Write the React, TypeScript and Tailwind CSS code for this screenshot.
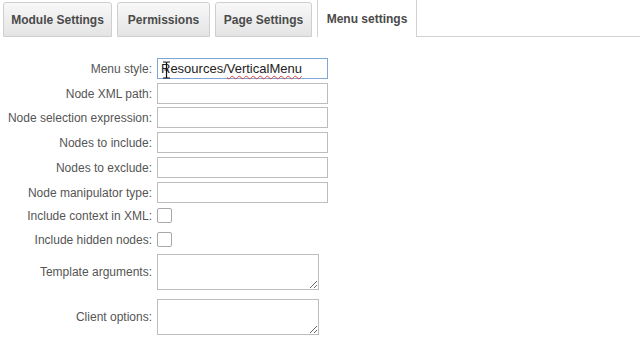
import React from 'react'

const font = { fontFamily: '"Liberation Sans", Arial, sans-serif' }

const tabs = [
  { label: 'Module Settings', w: 'w-[109px]' },
  { label: 'Permissions', w: 'w-[93px]' },
  { label: 'Page Settings', w: 'w-[97px]' },
]

function Label({ children }: { children: React.ReactNode }) {
  return (
    <div className="w-[153px] shrink-0 text-right text-[12px] text-[#555] leading-none pr-[1px]">
      {children}
    </div>
  )
}

function TextInput() {
  return (
    <input
      type="text"
      className="ml-[4px] h-[21px] w-[171px] border border-[#bdbdbd] bg-white px-[3px] text-[13px] outline-none"
    />
  )
}

function Checkbox() {
  return (
    <input
      type="checkbox"
      className="ml-[4px] h-[15px] w-[15px] appearance-none border border-[#a8a8a8] rounded-[2px] bg-white"
    />
  )
}

function TextArea() {
  return (
    <textarea className="ml-[4px] h-[36px] w-[162px] border border-[#bdbdbd] bg-white text-[13px] outline-none" />
  )
}

export default function App() {
  return (
    <div className="w-[640px] h-[360px] overflow-hidden bg-white" style={font}>
      <div className="flex items-end h-[37px] pl-[3px]">
        {tabs.map((t, i) => (
          <div
            key={t.label}
            className={`${t.w} ${i > 0 ? 'ml-[5px]' : ''} h-[35px] flex items-center justify-center rounded-t-[3px] border border-[#cfcfcf] bg-gradient-to-b from-[#f8f8f8] to-[#e4e4e4] text-[12px] font-bold text-[#4a4a4a]`}
          >
            {t.label}
          </div>
        ))}
        <div className="ml-[5px] w-[100px] h-[38px] flex items-center justify-center border-x border-[#d2d2d2] bg-white text-[12px] font-bold text-[#4a4a4a] pt-[1px]">
          Menu settings
        </div>
        <div className="flex-1 border-b border-[#d2d2d2]" />
      </div>

      <div className="pt-[21px] flex flex-col">
        <div className="flex items-center h-[21px]">
          <Label>Menu style:</Label>
          <div className="relative ml-[4px] h-[21px] w-[171px] border border-[#7fa6d6] bg-white pl-[3px] text-[13px] text-[#222] leading-[19px]">
            Resources/
            <span className="underline decoration-wavy decoration-[#e04040] decoration-1 underline-offset-2">
              VerticalMenu
            </span>
            <svg
              className="absolute left-[4px] top-[2px]"
              width="9"
              height="18"
              viewBox="0 0 9 18"
            >
              <path
                d="M1 1 H3.5 Q4.5 1 4.5 2.5 V15.5 Q4.5 17 3.5 17 H1 M8 1 H5.5 Q4.5 1 4.5 2.5 M4.5 15.5 Q4.5 17 5.5 17 H8 M2.5 9 H6.5"
                fill="none"
                stroke="#111"
                strokeWidth="1.2"
              />
            </svg>
          </div>
        </div>
        <div className="flex items-center mt-[4px]">
          <Label>Node XML path:</Label>
          <TextInput />
        </div>
        <div className="flex items-center mt-[3px]">
          <Label>Node selection expression:</Label>
          <TextInput />
        </div>
        <div className="flex items-center mt-[4px]">
          <Label>Nodes to include:</Label>
          <TextInput />
        </div>
        <div className="flex items-center mt-[4px]">
          <Label>Nodes to exclude:</Label>
          <TextInput />
        </div>
        <div className="flex items-center mt-[4px]">
          <Label>Node manipulator type:</Label>
          <TextInput />
        </div>
        <div className="flex items-center h-[15px] mt-[5px]">
          <Label>Include context in XML:</Label>
          <Checkbox />
        </div>
        <div className="flex items-center h-[15px] mt-[9px]">
          <Label>Include hidden nodes:</Label>
          <Checkbox />
        </div>
        <div className="flex items-center mt-[7px]">
          <Label>Template arguments:</Label>
          <TextArea />
        </div>
        <div className="flex items-center mt-[9px]">
          <Label>Client options:</Label>
          <TextArea />
        </div>
      </div>
    </div>
  )
}
